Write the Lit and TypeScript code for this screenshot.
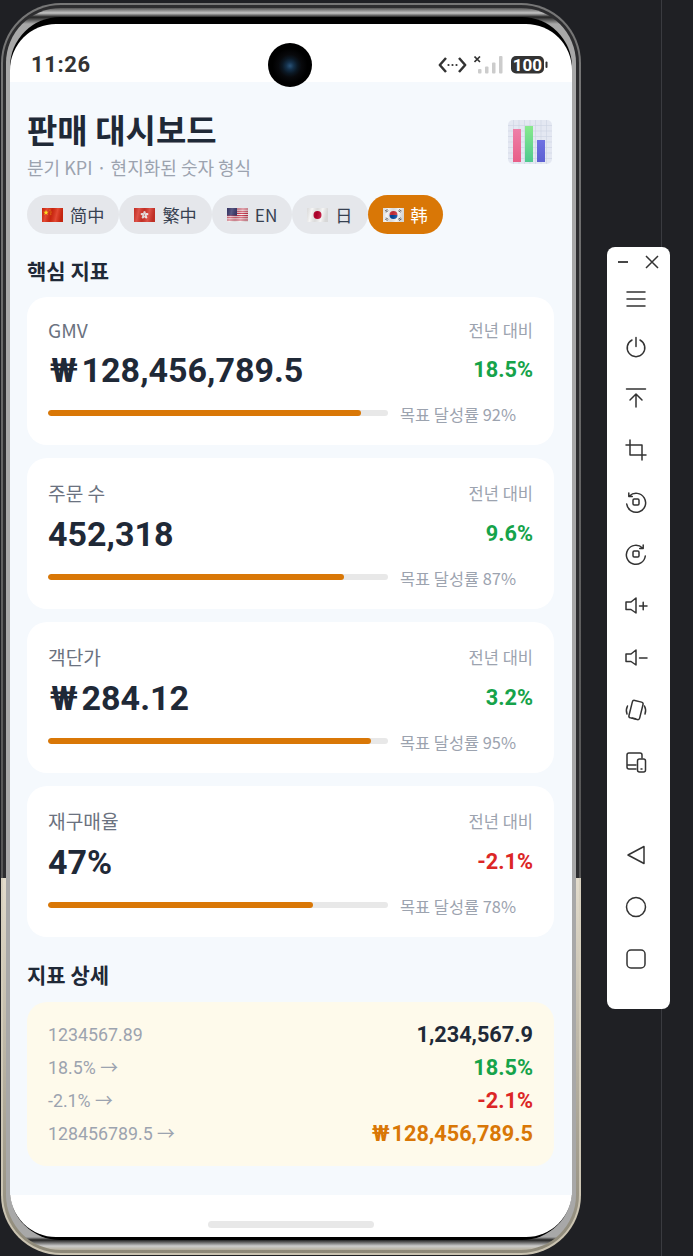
import { LitElement, html, css, svg } from "lit";
import { customElement } from "lit/decorators.js";

const wave = svg`<defs><linearGradient id="w" x1="0" y1="0" x2="1" y2="0.150">
  <stop offset="0" stop-color="#000" stop-opacity=".1"/><stop offset=".25" stop-color="#fff" stop-opacity=".15"/>
  <stop offset=".5" stop-color="#000" stop-opacity=".1"/><stop offset=".75" stop-color="#fff" stop-opacity=".15"/>
  <stop offset="1" stop-color="#000" stop-opacity=".12"/></linearGradient></defs>`;

const petals = [0, 72, 144, 216, 288].map(
  (a) => svg`<ellipse cx="10.500" cy="4.900" rx="1.300" ry="2" fill="#f7ecea" transform="rotate(${a} 10.500 7)"/>`
);

const flags: Record<string, unknown> = {
  cn: svg`<rect width="21" height="14" fill="#de2910"/><path d="M4 1.800l.7 2 2-.1-1.600 1.200.6 2-1.700-1.200-1.700 1.200.6-2L1.300 3.700l2 .1z" fill="#ffde00"/><circle cx="8" cy="2" r=".5" fill="#ffde00"/><circle cx="9" cy="4" r=".5" fill="#ffde00"/><circle cx="8.800" cy="6" r=".5" fill="#ffde00"/>`,
  hk: svg`<rect width="21" height="14" fill="#d8352a"/>${petals}<circle cx="10.500" cy="7" r=".6" fill="#d8352a"/>`,
  us: svg`<rect width="21" height="14" fill="#f4f2f2"/><path d="M0 1h21M0 3.200h21M0 5.400h21M0 7.600h21M0 9.800h21M0 12h21" stroke="#c8324a" stroke-width="1.100"/><rect width="10" height="7.600" fill="#3c3b6e"/>`,
  jp: svg`<rect width="21" height="14" fill="#f4f4f4"/><circle cx="10.500" cy="7" r="4" fill="#bc002d"/>`,
  kr: svg`<rect width="21" height="14" fill="#f2f2f2"/><path d="M6.500 7a4 4 0 0 1 8 0z" fill="#cd2e3a"/><path d="M6.500 7a4 4 0 0 0 8 0z" fill="#0047a0"/><path d="M2 3l2.500-1.500M2.800 4.200l2.500-1.500M16 1.500l2.500 1.500M15.200 2.700l2.500 1.500M2 11l2.500 1.500M2.800 9.800l2.500 1.500M16 12.500l2.500-1.500M15.200 11.300l2.500-1.500" stroke="#333" stroke-width=".8"/>`,
};

const chips = [
  ["cn", "简中"],
  ["hk", "繁中"],
  ["us", "EN"],
  ["jp", "日"],
  ["kr", "韩"],
];

const kpis = [
  { label: "GMV", tall: false, value: "₩128,456,789.5", delta: "18.5%", up: true, pct: 92 },
  { label: "주문 수", tall: true, value: "452,318", delta: "9.6%", up: true, pct: 87 },
  { label: "객단가", tall: true, value: "₩284.12", delta: "3.2%", up: true, pct: 95 },
  { label: "재구매율", tall: true, value: "47%", delta: "-2.1%", up: false, pct: 78 },
];

const details = [
  { key: "1234567.89", arrow: false, val: "1,234,567.9", tone: "ink" },
  { key: "18.5%", arrow: true, val: "18.5%", tone: "up" },
  { key: "-2.1%", arrow: true, val: "-2.1%", tone: "down" },
  { key: "128456789.5", arrow: true, val: "₩128,456,789.5", tone: "cur" },
];

const money = (v: string) =>
  v.startsWith("₩") ? html`<span class="won">₩</span>${v.slice(1)}` : v;

const tool = (body: unknown, cls = "") =>
  html`<svg class="ti ${cls}" viewBox="0 0 24 24" fill="none" stroke="#333" stroke-width="1.500" stroke-linecap="round" stroke-linejoin="round">${body}</svg>`;

@customElement("app-root")
export class AppRoot extends LitElement {
  static styles = css`
    :host {
      display: block;
      width: 693px;
      height: 1256px;
      overflow: hidden;
      background: linear-gradient(90deg, #1f2024 661px, #3a3b40 661px, #3a3b40 662px, #1f2024 662px);
      font-family: "Noto Sans CJK KR", "Noto Sans", sans-serif;
    }
    .page { display: flex; align-items: flex-start; padding: 3px 0 0 1px; }
    .frame {
      flex: none;
      width: 580px;
      height: 1252px;
      box-sizing: border-box;
      border-radius: 60px;
      padding: 2px;
      background: linear-gradient(180deg, #777 0, #555 875px, #d8d1bf 875px, #c9c2b0 100%);
    }
    .frame2 {
      height: 100%;
      box-sizing: border-box;
      border-radius: 58px;
      padding: 3px;
      background: linear-gradient(180deg, #2d2d2f 0, #2d2d2f 873px, #e3dccc 873px, #8d8878 100%);
    }
    .frame3 {
      height: 100%;
      box-sizing: border-box;
      border-radius: 55px;
      padding: 9px 4px 10px;
      background: linear-gradient(180deg, #555 0, #c4c4c4 5px, #222 9px, #a8a8a8 16px, #a8a8a8 calc(100% - 13px), #222 calc(100% - 10px), #ccc calc(100% - 4px), #b5ae9c 100%);
    }
    .bezel {
      height: 100%;
      box-sizing: border-box;
      border-radius: 50px;
      padding: 7px 0 3px;
      background: #000;
    }
    .screen {
      position: relative;
      height: 100%;
      border-radius: 46px;
      overflow: hidden;
      background: #fff;
      display: flex;
      flex-direction: column;
    }
    .status {
      flex: none;
      height: 58px;
      display: flex;
      align-items: center;
      justify-content: space-between;
      padding: 24px 24px 0 21px;
      box-sizing: border-box;
    }
    .time { font: 700 22px/1 "Roboto", sans-serif; color: #333; letter-spacing: .6px; }
    .sicons { display: flex; align-items: center; gap: 7px; }
    .sicons svg { display: block; }
    .camera {
      position: absolute;
      left: 258px;
      top: 19px;
      width: 44px;
      height: 44px;
      border-radius: 50%;
      background: radial-gradient(circle at 50% 52%, #2a5378 0, #14304a 12%, #0b1824 24%, #08090c 36%, #000 55%);
    }
    .content {
      flex: 1;
      background: #f5f9fd;
      padding: 0 18px 0 17px;
    }
    .head { display: flex; justify-content: space-between; align-items: center; padding-top: 27px; }
    h1 { margin: 0; font-size: 33px; line-height: 40px; font-weight: 700; color: #1f2937; }
    .sub { font-size: 18px; line-height: 24px; color: #9ca3af; margin-top: 6px; }
    .chart { width: 44px; height: 44px; margin: 0 2px 4px 0; display: block; }
    .chips { display: flex; margin-top: 16px; }
    .chip {
      display: flex;
      align-items: center;
      gap: 7px;
      height: 39px;
      padding: 0 15px;
      border-radius: 20px;
      background: #e5e7eb;
      color: #374151;
      font-size: 17.200px;
      white-space: nowrap;
    }
    .chip.on { background: #d97706; color: #fff; }
    .chip svg { width: 21px; height: 14px; display: block; }
    h2 { margin: 23px 0 14px; font-size: 21px; line-height: 26px; font-weight: 700; color: #1f2937; }
    .card {
      background: #fff;
      border-radius: 20px;
      padding: 20px 21px;
      margin-bottom: 13px;
    }
    .row { display: flex; justify-content: space-between; align-items: center; }
    .row1 { height: 26px; }
    .row1.tall { height: 29px; }
    .label { font-size: 19.200px; line-height: 26px; color: #6b7280; }
    .yoy { font-size: 16.500px; color: #9ca3af; }
    .row2 { height: 52px; padding-top: 2px; box-sizing: border-box; }
    .value { font: 700 34px/50px "Roboto", "Noto Sans CJK KR", sans-serif; color: #1f2937; }
    .value .won { margin: 0 4px 0 2px; }
    .delta { font: 700 21.700px/1 "Roboto", sans-serif; }
    .up { color: #16a34a; }
    .down { color: #dc2626; }
    .cur { color: #d97706; }
    .ink { color: #1f2937; }
    .bar-row { display: flex; align-items: center; gap: 12px; margin-top: 5px; }
    .track { width: 340px; height: 6px; border-radius: 3px; background: #e8e8e8; overflow: hidden; }
    .fill { height: 100%; background: #d97706; border-radius: 3px; }
    .goal { font-size: 16.400px; line-height: 22px; margin-top: 3px; color: #9ca3af; white-space: nowrap; }
    .detail {
      background: #fefaeb;
      border-radius: 20px;
      padding: 16px 21px;
    }
    .h2b { margin: 24px 0 15px; }
    .drow { display: flex; justify-content: space-between; align-items: center; height: 33px; }
    .dk { font: 400 17.800px "Roboto", sans-serif; color: #9ca3af; }
    .arr { font-family: "Noto Sans CJK KR", sans-serif; line-height: 1; }
    .dv { font: 700 21.700px "Roboto", sans-serif; }
    .dv .won { margin-right: 2px; }
    .foot { flex: none; height: 42px; display: flex; justify-content: center; padding-top: 26px; box-sizing: border-box; }
    .home { width: 166px; height: 7px; border-radius: 4px; background: #e8e8e8; }
    .tools {
      flex: none;
      margin: 244px 0 0 26px;
      width: 63px;
      height: 762px;
      background: #fff;
      border-radius: 8px;
      display: flex;
      flex-direction: column;
      align-items: center;
      box-sizing: border-box;
      padding: 7px 5px 0 0;
    }
    .win { display: flex; justify-content: space-between; width: 44px; height: 18px; align-self: flex-start; margin-left: 9px; }
    .win svg { width: 16px; height: 16px; display: block; }
    .ti { width: 24px; height: 24px; display: block; margin-top: 28px; flex: none; }
    .ti.first { margin-top: 15px; }
    .ti.m24 { margin-top: 24px; }
    .ti.m27 { margin-top: 27px; }
    .spacer { height: 41px; flex: none; }
  `;

  render() {
    return html`
      <div class="page">
        <div class="frame"><div class="frame2"><div class="frame3"><div class="bezel">
          <div class="screen">
            <div class="status">
              <span class="time">11:26</span>
              <div class="sicons">
                <svg width="29" height="18" viewBox="0 0 29 18" fill="none" stroke="#333" stroke-width="2.500" stroke-linejoin="round">
                  <path d="M8 2L1.800 9 8 16M21 2l6.200 7L21 16"/>
                  <circle cx="10.500" cy="9" r="1.100" fill="#333" stroke="none"/>
                  <circle cx="14.500" cy="9" r="1.100" fill="#333" stroke="none"/>
                  <circle cx="18.500" cy="9" r="1.100" fill="#333" stroke="none"/>
                </svg>
                <svg width="30" height="18" viewBox="0 0 30 18">
                  <path d="M.5.500l5.500 5.500M6 .500L.5 6" stroke="#333" stroke-width="1.600"/>
                  <rect x="4" y="13" width="3.500" height="4.500" rx="1" fill="#ccc"/>
                  <rect x="11" y="10.500" width="3.500" height="7" rx="1" fill="#ccc"/>
                  <rect x="18" y="6.500" width="3.500" height="11" rx="1" fill="#ccc"/>
                  <rect x="25" y="0" width="3.500" height="17.500" rx="1" fill="#ccc"/>
                </svg>
                <svg width="37" height="18" viewBox="0 0 37 18">
                  <rect width="33" height="17.500" rx="5" fill="#333"/>
                  <rect x="34.500" y="5.500" width="2" height="6.500" rx="1" fill="#333"/>
                  <text x="16.500" y="14.800" text-anchor="middle" font-family="Roboto, sans-serif" font-weight="700" font-size="17" fill="#fff">100</text>
                </svg>
              </div>
            </div>
            <div class="camera"></div>
            <div class="content">
              <div class="head">
                <div>
                  <h1>판매 대시보드</h1>
                  <div class="sub">분기 KPI · 현지화된 숫자 형식</div>
                </div>
                <svg class="chart" viewBox="0 0 44 44">
                  <defs>
                    <linearGradient id="p" x1="0" y1="0" x2="0" y2="1"><stop offset="0" stop-color="#ee7fa8"/><stop offset="1" stop-color="#e85f88"/></linearGradient>
                    <linearGradient id="g" x1="0" y1="0" x2="0" y2="1"><stop offset="0" stop-color="#88ea8c"/><stop offset="1" stop-color="#4fc98f"/></linearGradient>
                    <linearGradient id="b" x1="0" y1="0" x2="0" y2="1"><stop offset="0" stop-color="#6f71e2"/><stop offset="1" stop-color="#5c60d2"/></linearGradient>
                  </defs>
                  <rect width="44" height="44" rx="5" fill="#e4e8f2"/>
                  <path d="M0 5.500h44M0 11h44M0 16.500h44M0 22h44M0 27.500h44M0 33h44M0 38.500h44M5.500 0v44M11 0v44M16.500 0v44M22 0v44M27.500 0v44M33 0v44M38.500 0v44" stroke="#cdd3e3" stroke-width=".6"/>
                  <rect x="5" y="9" width="8" height="33" fill="url(#p)"/>
                  <rect x="17" y="6" width="8" height="36" fill="url(#g)"/>
                  <rect x="29" y="20" width="8" height="22" fill="url(#b)"/>
                </svg>
              </div>
              <div class="chips">
                ${chips.map(([f, t], i) => html`<div class="chip ${i === 4 ? "on" : ""}"><svg viewBox="0 0 21 14">${wave}${flags[f]}<rect width="21" height="14" fill="url(#w)"/></svg><span>${t}</span></div>`)}
              </div>
              <h2>핵심 지표</h2>
              ${kpis.map((k) => html`
                <div class="card">
                  <div class="row row1 ${k.tall ? "tall" : ""}"><span class="label">${k.label}</span><span class="yoy">전년 대비</span></div>
                  <div class="row row2"><span class="value">${money(k.value)}</span><span class="delta ${k.up ? "up" : "down"}">${k.delta}</span></div>
                  <div class="bar-row">
                    <div class="track"><div class="fill" style="width:${k.pct}%"></div></div>
                    <span class="goal">목표 달성률 ${k.pct}%</span>
                  </div>
                </div>`)}
              <h2 class="h2b">지표 상세</h2>
              <div class="detail">
                ${details.map((d) => html`<div class="drow"><span class="dk">${d.key}${d.arrow ? html` <span class="arr">→</span>` : ""}</span><span class="dv ${d.tone}">${money(d.val)}</span></div>`)}
              </div>
            </div>
            <div class="foot"><div class="home"></div></div>
          </div>
        </div></div></div></div>
        <div class="tools">
          <div class="win">
            <svg viewBox="0 0 16 16" stroke="#333" stroke-width="1.800"><path d="M2 8h10"/></svg>
            <svg viewBox="0 0 16 16" stroke="#333" stroke-width="1.500"><path d="M2 2l12 12M14 2L2 14"/></svg>
          </div>
          ${tool(svg`<path d="M3 5h18M3 12h18M3 19h18"/>`, "first")}
          ${tool(svg`<path d="M12 2.500v9M8 5a8.800 8.800 0 1 0 8 0"/>`, "m24")}
          ${tool(svg`<path d="M2.500 3h19M12 21V8M6 14l6-6 6 6"/>`, "m27")}
          ${tool(svg`<path d="M6 2v15h16M2 7h16v15"/>`)}
          ${tool(svg`<path d="M5.500 6a9.500 9.500 0 1 1-2.800 8M4.800 3v3.500h3.500"/><rect x="9" y="9" width="6" height="6" rx="1.200"/>`)}
          ${tool(svg`<path d="M18.500 6a9.500 9.500 0 1 0 2.800 8M19.200 3v3.500h-3.500"/><rect x="9" y="9" width="6" height="6" rx="1.200"/>`)}
          ${tool(svg`<path d="M12 4v15l-5-3.500H2V8h5zM15.500 12h7.500M19.200 8.200v7.600"/>`)}
          ${tool(svg`<path d="M12 4v15l-5-3.500H2V8h5zM15.500 12h7.500"/>`)}
          ${tool(svg`<rect x="6.500" y="3" width="11" height="18" rx="2" transform="rotate(14 12 12)"/><path d="M8 20l3.500.8M3.500 8a10 10 0 0 0-.5 8M20.500 8a10 10 0 0 1 .5 8"/>`)}
          ${tool(svg`<path d="M12 19H5a2 2 0 0 1-2-2V5a2 2 0 0 1 2-2h11a2 2 0 0 1 2 2v3M3 15h9"/><rect x="13.500" y="9" width="8" height="13" rx="2"/><path d="M17 19h1"/>`)}
          <div class="spacer"></div>
          ${tool(svg`<path d="M20 3.500v17L4 12z"/>`)}
          ${tool(svg`<circle cx="12" cy="12" r="9.500"/>`)}
          ${tool(svg`<rect x="3" y="3" width="18" height="18" rx="4"/>`)}
        </div>
      </div>
    `;
  }
}
